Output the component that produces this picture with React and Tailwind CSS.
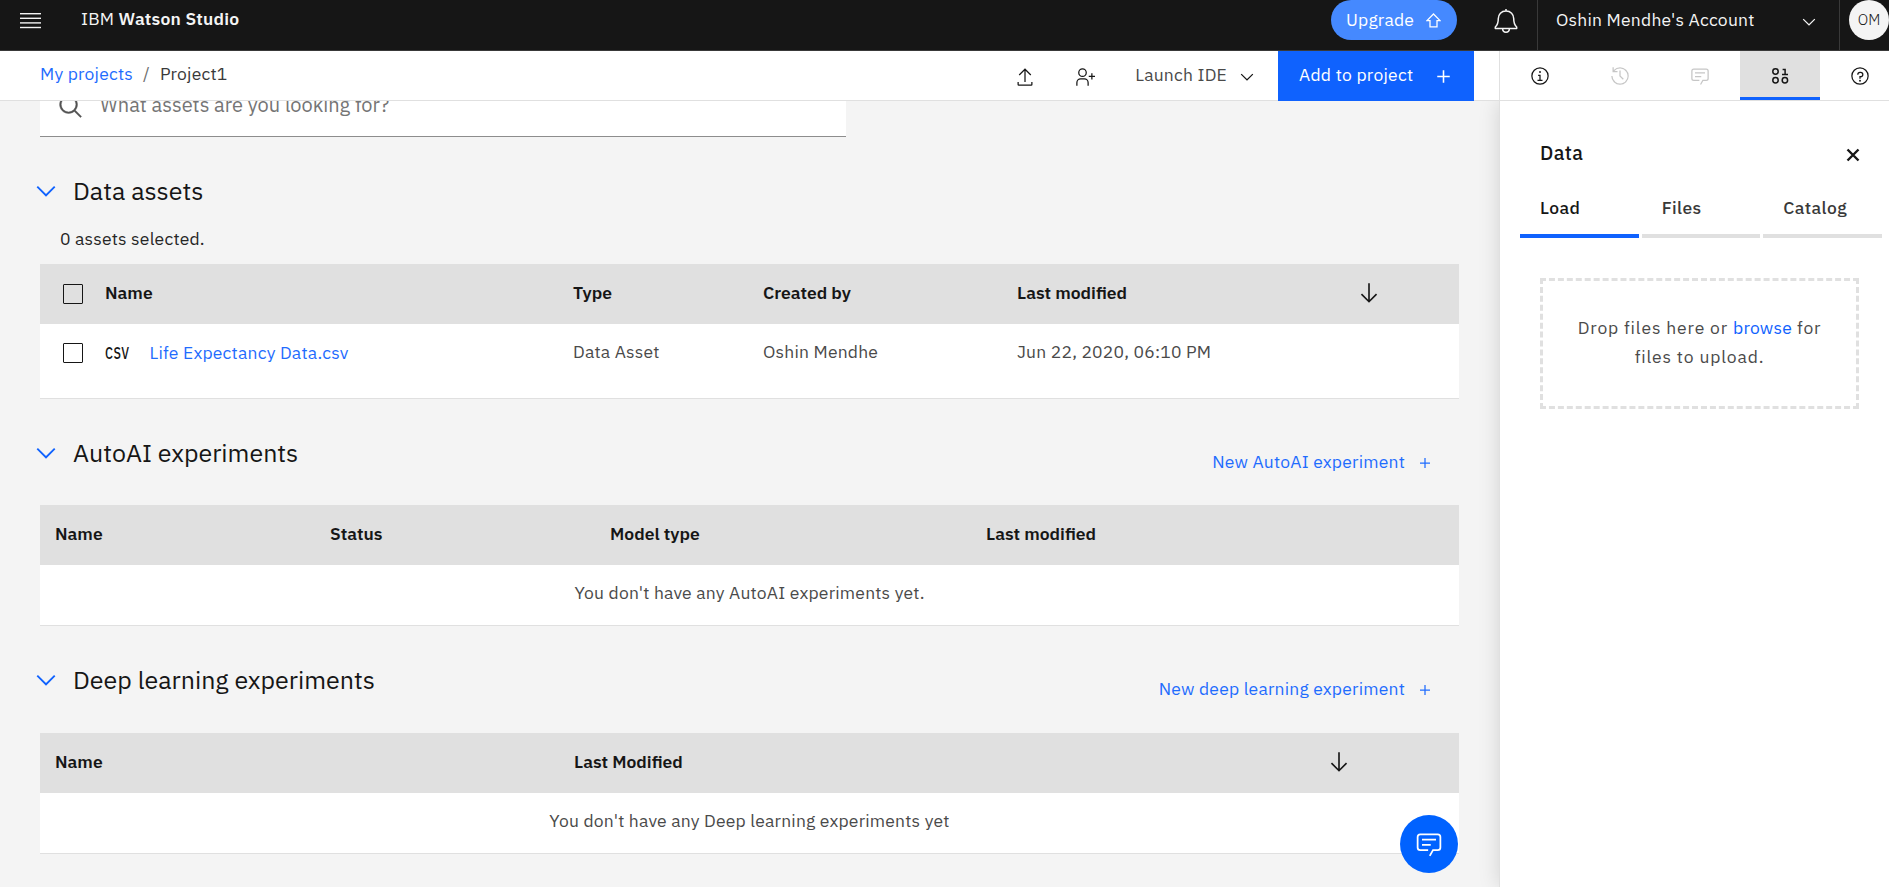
const PATHS = {
  chevron: "M16 22L6 12 7.4 10.6 16 19.2 24.6 10.6 26 12z",
  add: "M17 15V8h-2v7H8v2h7v7h2v-7h7v-2z",
  arrowDown: "M24.59 16.59L17 24.17V4h-2v20.17l-7.59-7.58L6 18l10 10 10-10z",
  export:
    "M26 24v4H6v-4H4v4a2 2 0 002 2h20a2 2 0 002-2v-4zM6 12l1.41 1.41L15 5.83V24h2V5.83l7.59 7.58L26 12 16 2z",
  userFollow:
    "M32 14h-4v-4h-2v4h-4v2h4v4h2v-4h4zM12 4a5 5 0 11-5 5 5 5 0 015-5m0-2a7 7 0 107 7 7 7 0 00-7-7zM22 30h-2v-5a5 5 0 00-5-5H9a5 5 0 00-5 5v5H2v-5a7 7 0 017-7h6a7 7 0 017 7z",
  search:
    "M29 27.586l-7.552-7.552a11.018 11.018 0 10-1.414 1.414L27.586 29zM4 13a9 9 0 119 9 9.01 9.01 0 01-9-9z",
  info: "M17 22v-8h-4v2h2v6h-3v2h8v-2zM16 8a1.5 1.5 0 101.5 1.5A1.5 1.5 0 0016 8zM16 30a14 14 0 1114-14 14 14 0 01-14 14zm0-26a12 12 0 1012 12A12 12 0 0016 4z",
  help: "M17 9h-1a4.5 4.5 0 00-4.5 4.5v.5h2v-.5A2.5 2.5 0 0116 11h1a2.5 2.5 0 010 5h-2v4.5h2V18a4.5 4.5 0 000-9zM16 22a1.5 1.5 0 101.5 1.5A1.5 1.5 0 0016 22zM16 30a14 14 0 1114-14 14 14 0 01-14 14zm0-26a12 12 0 1012 12A12 12 0 0016 4z",
  recent:
    "M20.59 22L15 16.41V7h2v8.58l5 5.01zM16 2A13.94 13.94 0 006 6.23V2H4v8h8V8H7.08A12 12 0 114 16H2A14 14 0 1016 2z",
  chat: "M17.74 30L16 29l4-7h6a2 2 0 002-2V8a2 2 0 00-2-2H6a2 2 0 00-2 2v12a2 2 0 002 2h9v2H6a4 4 0 01-4-4V8a4 4 0 014-4h20a4 4 0 014 4v12a4 4 0 01-4 4h-4.84zM8 10h16v2H8zM8 16h10v2H8z",
};

function Icon({ name, className }) {
  return (
    <svg viewBox="0 0 32 32" fill="currentColor" className={`block shrink-0 ${className}`}>
      <path d={PATHS[name]} />
    </svg>
  );
}

function TopBar() {
  return (
    <header className="relative z-10 flex h-[51px] shrink-0 items-start border-b border-[#393939] bg-[#161616] text-[#f4f4f4]">
      <svg viewBox="0 0 21 16" className="mt-[13px] ml-5 h-4 w-[21px]" fill="currentColor">
        <rect width="21" height="1.4" y="0" />
        <rect width="21" height="1.4" y="4.6" />
        <rect width="21" height="1.4" y="9.2" />
        <rect width="21" height="1.4" y="13.8" />
      </svg>
      <div className="mt-[7px] ml-10 tracking-[0.2px]">
        IBM <span className="font-semibold">Watson Studio</span>
      </div>
      <div className="ml-auto flex h-full items-start">
        <button className="flex h-10 w-[126px] items-center rounded-full bg-[#4589ff] pl-[15px] text-white">
          <span className="-mt-px tracking-[0.2px]">Upgrade</span>
          <svg
            viewBox="0 0 15 15"
            className="ml-3 h-[15px] w-[15px]"
            fill="none"
            stroke="currentColor"
            strokeWidth="1.3"
          >
            <path d="M7.5 1L14 7.6h-3v6.2H4V7.6H1z" />
          </svg>
        </button>
        <svg
          viewBox="0 0 24 25"
          className="mt-[9px] mr-px ml-[37px] h-[25px] w-6"
          fill="none"
          stroke="currentColor"
          strokeWidth="1.5"
          strokeLinejoin="round"
        >
          <path d="M12 0v2M12 2c-4.700 0-7.700 3.300-7.700 7.600 0 4.800-.7 6.600-3 8.400v1.400h21.400V18c-2.300-1.800-3-3.600-3-8.400C19.700 5.300 16.700 2 12 2zM8.600 19.600c0 2.400 1.400 3.700 3.400 3.700s3.400-1.300 3.400-3.700" />
        </svg>
        <div className="ml-[18px] flex h-full w-[303px] border-x border-[#393939]">
          <span className="mt-2 ml-[18px] tracking-[0.22px]">Oshin Mendhe's Account</span>
          <Icon name="chevron" className="mt-3 mr-5 ml-auto h-5 w-5" />
        </div>
        <div className="ml-[9px] flex h-10 w-10 items-center justify-center rounded-full bg-[#f4f4f4] text-[15px] font-light text-[#161616]">
          OM
        </div>
      </div>
    </header>
  );
}

function DataIcon() {
  return (
    <svg viewBox="0 0 17 16" className="mt-[3px] h-4 w-[17px]" fill="none" stroke="currentColor" strokeWidth="1.5">
      <circle cx="3.500" cy="3.500" r="2.700" />
      <circle cx="3.500" cy="12.200" r="2.700" />
      <circle cx="12.900" cy="12.200" r="2.700" />
      <path d="M10.600 1.500h2.500v5M10 6.500h6" />
    </svg>
  );
}

function PanelTab({ children, className = "" }) {
  return <div className={`flex h-[49px] w-20 shrink-0 items-center justify-center ${className}`}>{children}</div>;
}

function ProjectBar() {
  return (
    <div className="relative z-10 flex h-[50px] shrink-0 border-b border-[#e0e0e0] bg-white">
      <nav className="mt-[11px] ml-10 flex tracking-[0.2px]">
        <a className="text-[#1f6cfe]">My projects</a>
        <span className="mx-[10px] text-[#6f6f6f]">/</span>
        <span className="text-[#393939]">Project1</span>
      </nav>
      <div className="ml-auto flex">
        <Icon name="export" className="mt-4 h-5 w-5" />
        <Icon name="userFollow" className="mt-4 ml-10 h-5 w-5" />
        <span className="mt-[12px] ml-10 tracking-[0.2px] text-[#4a4a4a]">Launch IDE</span>
        <Icon name="chevron" className="mt-4 ml-[10px] h-5 w-5" />
        <button className="ml-[21px] flex h-[50px] w-[196px] items-start bg-[#0f62fe] text-white">
          <span className="mt-3 ml-[21px] tracking-[0.25px]">Add to project</span>
          <Icon name="add" className="mt-[13px] ml-[18px] h-[25px] w-[25px]" />
        </button>
      </div>
      <div className="ml-[25px] flex w-[390px] shrink-0 overflow-hidden border-l border-[#e0e0e0]">
        <PanelTab>
          <Icon name="info" className="h-5 w-5" />
        </PanelTab>
        <PanelTab className="text-[#c6c6c6]">
          <Icon name="recent" className="h-5 w-5" />
        </PanelTab>
        <PanelTab className="text-[#c6c6c6]">
          <Icon name="chat" className="h-5 w-5" />
        </PanelTab>
        <PanelTab className="border-b-[3px] border-[#0f62fe] bg-[#e0e0e0]">
          <DataIcon />
        </PanelTab>
        <PanelTab>
          <Icon name="help" className="h-5 w-5" />
        </PanelTab>
      </div>
    </div>
  );
}

function SectionHeading({ title, action, className }) {
  return (
    <div className={`flex h-8 items-center pl-[31px] ${className}`}>
      <Icon name="chevron" className="-mt-px h-[30px] w-[30px] text-[#0f62fe]" />
      <h2 className="ml-3 text-[25px] leading-8 font-normal">{title}</h2>
      {action && (
        <a className="mt-[17px] mr-[64px] ml-auto flex h-6 items-center tracking-[0.2px] text-[#1f6cfe]">
          {action}
          <Icon name="add" className="mt-[2px] ml-[10px] h-5 w-5" />
        </a>
      )}
    </div>
  );
}

function Checkbox({ className }) {
  return <span className={`block h-5 w-5 rounded-[1px] border border-[#161616] ${className}`} />;
}

function DataAssetsTable() {
  return (
    <div className="mt-[13px] mr-10 ml-10 border-b border-[#e0e0e0] bg-white">
      <div className="grid h-[60px] grid-cols-[65px_468px_190px_254px_auto] bg-[#e0e0e0] pt-[17px] font-semibold">
        <Checkbox className="mt-[3px] ml-[23px]" />
        <span>Name</span>
        <span>Type</span>
        <span>Created by</span>
        <span className="flex">
          Last modified
          <Icon name="arrowDown" className="mr-[77px] -mt-[1px] ml-auto h-[26px] w-[26px]" />
        </span>
      </div>
      <div className="grid h-[74px] grid-cols-[65px_468px_190px_254px_auto] pt-4 tracking-[0.2px] text-[#4a4a4a]">
        <Checkbox className="mt-[3px] ml-[23px]" />
        <span className="mt-px flex">
          <span className="w-[44.5px] origin-left scale-x-[0.78] text-[16px] font-medium tracking-[0.6px] text-[#161616]">
            CSV
          </span>
          <a className="text-[#1f6cfe]">Life Expectancy Data.csv</a>
        </span>
        <span>Data Asset</span>
        <span>Oshin Mendhe</span>
        <span>Jun 22, 2020, 06:10 PM</span>
      </div>
    </div>
  );
}

function EmptyTable({ header, message, className }) {
  return (
    <div className={`mr-10 ml-10 border-b border-[#e0e0e0] bg-white ${className}`}>
      {header}
      <div className="h-[60px] pt-4 text-center tracking-[0.2px] text-[#4a4a4a]">{message}</div>
    </div>
  );
}

function Main() {
  return (
    <main className="min-w-0 flex-1 overflow-hidden">
      <div className="ml-10 flex h-9 w-[806px] border-b border-[#8d8d8d] bg-white">
        <Icon name="search" className="-mt-[7px] ml-[18px] h-[26px] w-[26px] stroke-[#525252] stroke-[0.5] text-[#525252]" />
        <span className="-mt-[9px] ml-4 text-[20px] leading-[26px] text-[#757575]">
          What assets are you looking for?
        </span>
      </div>

      <SectionHeading title="Data assets" className="mt-[38px]" />
      <p className="mt-5 ml-[60px] tracking-[0.2px] text-[#262626]">0 assets selected.</p>
      <DataAssetsTable />

      <SectionHeading title="AutoAI experiments" action="New AutoAI experiment" className="mt-[38px]" />
      <EmptyTable
        className="mt-9"
        header={
          <div className="grid h-[60px] grid-cols-[275px_280px_376px_auto] bg-[#e0e0e0] pt-[17px] pl-[15px] font-semibold">
            <span>Name</span>
            <span>Status</span>
            <span>Model type</span>
            <span>Last modified</span>
          </div>
        }
        message="You don't have any AutoAI experiments yet."
      />

      <SectionHeading
        title="Deep learning experiments"
        action="New deep learning experiment"
        className="mt-[38px]"
      />
      <EmptyTable
        className="mt-[37px]"
        header={
          <div className="grid h-[60px] grid-cols-[519px_auto] bg-[#e0e0e0] pt-[17px] pl-[15px] font-semibold">
            <span>Name</span>
            <span className="flex">
              Last Modified
              <Icon name="arrowDown" className="mr-[107px] -mt-px ml-auto h-[26px] w-[26px]" />
            </span>
          </div>
        }
        message="You don't have any Deep learning experiments yet"
      />
    </main>
  );
}

function SidePanel() {
  return (
    <aside className="w-[390px] shrink-0 border-l border-[#e0e0e0] bg-white shadow-[0_0_20px_rgba(0,0,0,0.14)]">
      <div className="mt-[40px] ml-10 flex h-6 pr-[29px]">
        <h3 className="text-[19.5px] leading-6 font-medium tracking-[0.4px]">Data</h3>
        <svg
          viewBox="0 0 14 14"
          className="mt-[7px] ml-auto h-[14px] w-[14px]"
          stroke="currentColor"
          strokeWidth="2.4"
        >
          <path d="M1.500 1.500l11 11M12.500 1.500l-11 11" />
        </svg>
      </div>
      <div className="mt-[22px] ml-5 grid h-[51px] w-[362px] grid-cols-3 gap-[3px] font-medium tracking-[0.4px]">
        <div className="border-b-4 border-[#0f62fe] pt-[9px] pl-5">Load</div>
        <div className="border-b-4 border-[#e0e0e0] pt-[9px] pl-5 text-[#393939]">Files</div>
        <div className="border-b-4 border-[#e0e0e0] pt-[9px] pl-5 text-[#393939]">Catalog</div>
      </div>
      <div className="mt-10 ml-10 h-[131px] w-[319px] border-[3px] border-dashed border-[#e0e0e0] px-8 pt-[32px] text-center leading-[29px] tracking-[0.85px] text-[#4a4a4a]">
        Drop files here or <a className="tracking-[0.2px] text-[#0f62fe]">browse</a> for files to upload.
      </div>
    </aside>
  );
}

export default function App() {
  return (
    <div className="relative flex h-[887px] w-full flex-col overflow-hidden bg-[#f4f4f4] font-['IBM_Plex_Sans','Roboto',sans-serif] text-[17.5px] leading-6 text-[#161616]">
      <TopBar />
      <ProjectBar />
      <div className="flex min-h-0 flex-1">
        <Main />
        <SidePanel />
      </div>
      <button className="absolute top-[815px] left-[1400px] flex h-[58px] w-[58px] items-center justify-center rounded-full bg-[#0062ff] text-white">
        <Icon name="chat" className="h-7 w-7" />
      </button>
    </div>
  );
}
